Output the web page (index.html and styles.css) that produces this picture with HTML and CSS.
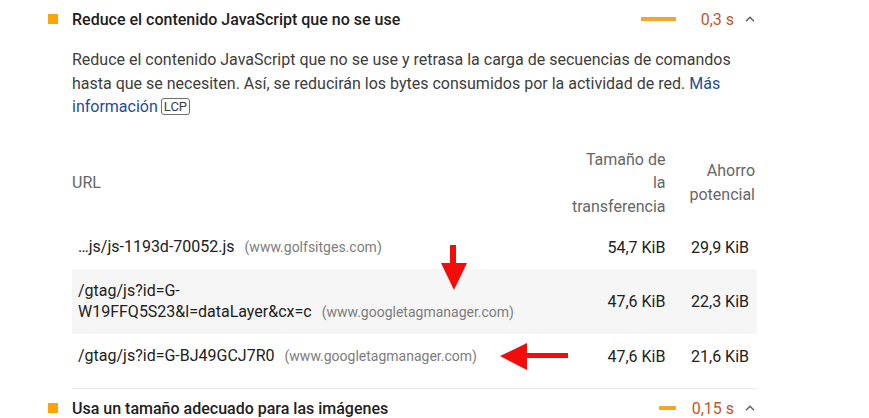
FILE: index.html
```html
<html>
    <head>
        <title>Reduce el contenido JavaScript</title>
        <link rel="stylesheet" href="styles.css">
    </head>

    <body>
        <div class="audits">

            <section class="audit">
                <div class="audit-head">
                    <span class="sq"></span>
                    <span class="title">Reduce el contenido JavaScript que no se use</span>
                    <span class="bar bar-long"></span>
                    <span class="value">0,3 s</span>
                    <svg class="chev" width="10" height="6" viewBox="0 0 10 6"><path d="M1 5.2 L5 1.3 L9 5.2" fill="none" stroke="#616161" stroke-width="1.5"/></svg>
                </div>

                <div class="audit-body">
                    <p class="desc">Reduce el contenido JavaScript que no se use y retrasa la carga de secuencias de comandos hasta que se necesiten. Así, se reducirán los bytes consumidos por la actividad de red. <a href="#">Más información</a><span class="badge">LCP</span></p>

                    <table class="tbl">
                        <thead>
                            <tr>
                                <th class="col-url">URL</th>
                                <th class="col-num">Tamaño de la transferencia</th>
                                <th class="col-save">Ahorro potencial</th>
                            </tr>
                        </thead>
                        <tbody>
                            <tr>
                                <td class="col-url"><span class="url">…js/js-1193d-70052.js</span><span class="host">(www.golfsitges.com)</span></td>
                                <td class="col-num">54,7 KiB</td>
                                <td class="col-save">29,9 KiB</td>
                            </tr>
                            <tr class="odd">
                                <td class="col-url"><span class="url">/gtag/js?id=G-W19FFQ5S23&amp;l=dataLayer&amp;cx=c</span><span class="host">(www.googletagmanager.com)</span></td>
                                <td class="col-num">47,6 KiB</td>
                                <td class="col-save">22,3 KiB</td>
                            </tr>
                            <tr>
                                <td class="col-url"><span class="url">/gtag/js?id=G-BJ49GCJ7R0</span><span class="host">(www.googletagmanager.com)</span></td>
                                <td class="col-num">47,6 KiB</td>
                                <td class="col-save">21,6 KiB</td>
                            </tr>
                        </tbody>
                    </table>
                </div>
            </section>

            <section class="audit">
                <div class="audit-head">
                    <span class="sq"></span>
                    <span class="title">Usa un tamaño adecuado para las imágenes</span>
                    <span class="bar bar-short"></span>
                    <span class="value">0,15 s</span>
                    <svg class="chev" width="10" height="6" viewBox="0 0 10 6"><path d="M1 5.2 L5 1.3 L9 5.2" fill="none" stroke="#616161" stroke-width="1.5"/></svg>
                </div>
            </section>

        </div>

        <!-- red marks drawn over the screenshot -->
        <svg class="marks" width="869" height="418" viewBox="0 0 869 418">
            <rect x="450" y="245" width="6" height="19" fill="#f20d0d"/>
            <polygon points="441,263 467,263 454,290" fill="#f20d0d"/>
            <rect x="526" y="353" width="42" height="5" fill="#f20d0d"/>
            <polygon points="500,356 527,343 527,370" fill="#f20d0d"/>
        </svg>
    </body>
</html>
```

FILE: styles.css
```css
body{
    margin: 0;
    background-color: white;
    font-family: Roboto, "Liberation Sans", sans-serif;
    color: #212121;
}

.audits{
    margin-left: 48px;
    width: 709px;
}

.audit-head{
    display: flex;
    align-items: center;
    height: 38px;
}

.sq{
    width: 10px;
    height: 10px;
    background-color: #ffa400;
    margin-right: 14px;
}

.title{
    flex: 1;
    font-size: 16px;
    font-weight: 500;
    color: #212121;
}

.bar{
    height: 4px;
    background-color: #f4a628;
}

.bar-long{
    width: 35px;
}

.bar-short{
    width: 17px;
}

.value{
    width: 58px;
    text-align: right;
    font-size: 16px;
    color: #c4552b;
}

.chev{
    margin-left: 11px;
    margin-right: 2px;
}

.audit-body{
    margin-left: 24px;
    padding-bottom: 10px;
    border-bottom: 1px solid #e8e8e8;
}

.desc{
    margin: 10px 0 0 0;
    font-size: 16px;
    line-height: 23.5px;
    color: #3d3d3d;
}

.desc a{
    color: #1c4c96;
    text-decoration: none;
}

.badge{
    display: inline-block;
    margin-left: 3px;
    padding: 0 2px;
    border: 1px solid #6f6f6f;
    border-radius: 3px;
    font-size: 13px;
    line-height: 15px;
    color: #3d3d3d;
    vertical-align: 1px;
}

.tbl{
    margin-top: 29px;
    width: 100%;
    border-collapse: collapse;
    font-size: 16px;
}

.tbl th{
    font-weight: normal;
    color: #666666;
    line-height: 23.5px;
    padding: 0 0 7px 0;
    vertical-align: middle;
}

.tbl th.col-url{
    width: 100%;
    text-align: left;
}

.tbl th.col-num{
    text-align: right;
    padding-left: 8px;
    padding-right: 6px;
}

.tbl th.col-save{
    text-align: right;
    padding-left: 18px;
    padding-right: 2px;
}

.tbl td{
    line-height: 21px;
    padding: 11px 0;
    vertical-align: middle;
}

.tbl td.col-url{
    padding-left: 6px;
    padding-right: 6px;
}

.tbl td.col-num{
    text-align: right;
    white-space: nowrap;
    padding-right: 6px;
}

.tbl td.col-save{
    text-align: right;
    white-space: nowrap;
    padding-right: 8px;
}

.tbl tr.odd td{
    background-color: #f6f6f6;
}

.url{
    color: #212121;
}

.host{
    margin-left: 10px;
    font-size: 14px;
    color: #7d7d7d;
}

.marks{
    position: absolute;
    top: 0;
    left: 0;
    pointer-events: none;
}
```
